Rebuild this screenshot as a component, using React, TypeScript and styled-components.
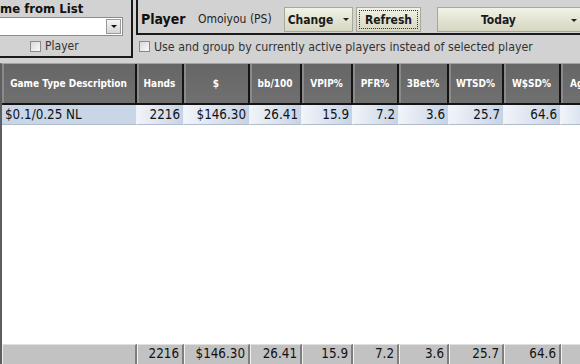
import React from "react";
import styled, { createGlobalStyle } from "styled-components";

const GlobalStyle = createGlobalStyle`
  html, body {
    margin: 0;
    padding: 0;
    background: #d2d2d2;
    overflow: hidden;
  }
  * {
    box-sizing: border-box;
  }
`;

const FONT = `"DejaVu Sans Condensed", "DejaVu Sans", Tahoma, sans-serif`;

type Column = { title: string; width: number; value: string; total: string };

const columns: Column[] = [
  { title: "Game Type Description", width: 135, value: "$0.1/0.25 NL", total: "" },
  { title: "Hands", width: 47, value: "2216", total: "2216" },
  { title: "$", width: 66, value: "$146.30", total: "$146.30" },
  { title: "bb/100", width: 52, value: "26.41", total: "26.41" },
  { title: "VPIP%", width: 51, value: "15.9", total: "15.9" },
  { title: "PFR%", width: 46, value: "7.2", total: "7.2" },
  { title: "3Bet%", width: 50, value: "3.6", total: "3.6" },
  { title: "WTSD%", width: 55, value: "25.7", total: "25.7" },
  { title: "W$SD%", width: 57, value: "64.6", total: "64.6" },
  { title: "Agg", width: 40, value: "1.", total: "1." },
];

const Page = styled.div`
  width: 580px;
  height: 364px;
  display: flex;
  flex-direction: column;
  background: #d2d2d2;
  font-family: ${FONT};
  color: #111;
  overflow: hidden;
`;

const TopBar = styled.div`
  height: 60px;
  flex: none;
  display: flex;
  gap: 3px;
  align-items: flex-start;
`;

const LeftPanel = styled.div`
  flex: none;
  width: 133px;
  height: 58px;
  border-right: 2px solid #1a1a1a;
  border-bottom: 2px solid #1a1a1a;
  display: flex;
  flex-direction: column;
`;

const PanelTitle = styled.div`
  font-weight: bold;
  font-size: 13px;
  height: 17px;
  line-height: 17px;
  white-space: nowrap;
  color: #111;
`;

const Combo = styled.div`
  width: 123px;
  height: 19px;
  background: #fff;
  border: 1px solid #8c8c8c;
  border-left: none;
  display: flex;
  justify-content: flex-end;
  align-items: center;
  padding-right: 1px;
`;

const ComboArrow = styled.div`
  width: 15px;
  height: 15px;
  background: linear-gradient(#f4f4f4, #d6d6d6);
  border: 1px solid #9a9a9a;
  display: flex;
  align-items: center;
  justify-content: center;
  &::after {
    content: "";
    border-left: 3px solid transparent;
    border-right: 3px solid transparent;
    border-top: 3px solid #111;
  }
`;

const CheckRow = styled.label<{ $indent?: number }>`
  display: flex;
  align-items: center;
  gap: 4px;
  padding-left: ${({ $indent }) => $indent ?? 0}px;
  font-size: 12px;
  color: #333;
  white-space: nowrap;
  height: 20px;
`;

const Box = styled.span`
  flex: none;
  width: 11px;
  height: 11px;
  border: 1px solid #8a8a8a;
  background: linear-gradient(135deg, #d8d8d8, #fafafa);
  display: inline-block;
`;

const RightPanel = styled.div`
  flex: 1;
  min-width: 0;
  display: flex;
  flex-direction: column;
`;

const PlayerRow = styled.div`
  height: 35px;
  border-left: 2px solid #1a1a1a;
  border-bottom: 2px solid #1a1a1a;
  display: flex;
  align-items: flex-end;
  padding: 0 0 1px 3px;
  overflow: hidden;
`;

const PlayerLabel = styled.span`
  flex: none;
  font-weight: bold;
  font-size: 14px;
  width: 57px;
  line-height: 25px;
`;

const PlayerName = styled.span`
  flex: none;
  font-size: 12px;
  color: #222;
  width: 83px;
  line-height: 25px;
`;

const Button = styled.div<{ $focus?: boolean; $width: number; $wide?: boolean }>`
  flex: none;
  width: ${({ $width }) => $width}px;
  margin-left: ${({ $wide }) => ($wide ? 16 : 3)}px;
  height: 25px;
  border: 1px solid #a8a898;
  background: linear-gradient(#f2f2e6, #d6d6c2);
  display: flex;
  align-items: center;
  justify-content: ${({ $wide }) => ($wide ? "flex-start" : "center")};
  padding-left: ${({ $wide }) => ($wide ? 43 : 0)}px;
  position: relative;
  font-weight: bold;
  font-size: 12px;
  color: #1a1a1a;
  ${({ $focus }) =>
    $focus
      ? `&::before { content: ""; position: absolute; inset: 2px; border: 1px dotted #333; }`
      : ""}
`;

const Arrow = styled.span<{ $left?: number }>`
  display: inline-block;
  margin-left: 10px;
  border-left: 3px solid transparent;
  border-right: 3px solid transparent;
  border-top: 3px solid #222;
  ${({ $left }) =>
    $left !== undefined ? `position: absolute; left: ${$left}px; top: 11px; margin: 0;` : ""}
`;

const OptionRow = styled(CheckRow)`
  height: 23px;
  font-size: 12.3px;
  color: #333;
`;

const Grid = styled.div`
  flex: 1;
  margin-top: 3px;
  display: flex;
  flex-direction: column;
  border-left: 2px solid #5e5e5e;
  border-top: 1px solid #a4a4a4;
  width: 600px;
`;

const Row = styled.div`
  display: flex;
`;

const HeadCell = styled.div<{ $w: number }>`
  width: ${({ $w }) => $w}px;
  flex: none;
  height: 41px;
  background: linear-gradient(#666, #707070);
  border-right: 2px solid #141414;
  border-bottom: 2px solid #141414;
  box-shadow: inset 2px 0 0 #8a8a8a;
  color: #fff;
  font-weight: bold;
  font-size: 10px;
  display: flex;
  align-items: center;
  justify-content: center;
  white-space: nowrap;
  overflow: hidden;
`;

const DataCell = styled.div<{ $w: number; $first?: boolean }>`
  width: ${({ $w }) => $w}px;
  flex: none;
  height: 20px;
  background: ${({ $first }) =>
    $first ? "#c9d6e8" : "linear-gradient(to right, #f1f4f9, #c6d3e6)"};
  border-right: 1px solid #eef2f8;
  border-bottom: 1px solid #b0bccc;
  font-size: 13.3px;
  line-height: 19px;
  text-align: ${({ $first }) => ($first ? "left" : "right")};
  padding: 0 3px;
  white-space: nowrap;
  overflow: hidden;
`;

const Empty = styled.div`
  flex: 1;
  background: #fff;
`;

const FootCell = styled.div<{ $w: number }>`
  width: ${({ $w }) => $w}px;
  flex: none;
  height: 20px;
  background: #c2c2c2;
  border-top: 1px solid #e0e0e0;
  border-left: 1px solid #f0f0f0;
  border-right: 2px solid #7e7e7e;
  font-size: 13.3px;
  line-height: 18px;
  text-align: right;
  padding: 0 3px;
  white-space: nowrap;
  overflow: hidden;
`;

export default function App() {
  return (
    <>
      <GlobalStyle />
      <Page>
        <TopBar>
          <LeftPanel>
            <PanelTitle>me from List</PanelTitle>
            <Combo>
              <ComboArrow />
            </Combo>
            <CheckRow $indent={30}>
              <Box />
              Player
            </CheckRow>
          </LeftPanel>
          <RightPanel>
            <PlayerRow>
              <PlayerLabel>Player</PlayerLabel>
              <PlayerName>Omoiyou (PS)</PlayerName>
              <Button $width={69}>
                Change
                <Arrow />
              </Button>
              <Button $width={65} $focus>
                Refresh
              </Button>
              <Button $width={160} $wide>
                Today
                <Arrow $left={133} />
              </Button>
            </PlayerRow>
            <OptionRow $indent={3}>
              <Box />
              Use and group by currently active players instead of selected player
            </OptionRow>
          </RightPanel>
        </TopBar>
        <Grid>
          <Row>
            {columns.map((c) => (
              <HeadCell key={c.title} $w={c.width}>
                {c.title}
              </HeadCell>
            ))}
          </Row>
          <Row>
            {columns.map((c, i) => (
              <DataCell key={c.title} $w={c.width} $first={i === 0}>
                {c.value}
              </DataCell>
            ))}
          </Row>
          <Empty />
          <Row>
            {columns.map((c) => (
              <FootCell key={c.title} $w={c.width}>
                {c.total}
              </FootCell>
            ))}
          </Row>
        </Grid>
      </Page>
    </>
  );
}
